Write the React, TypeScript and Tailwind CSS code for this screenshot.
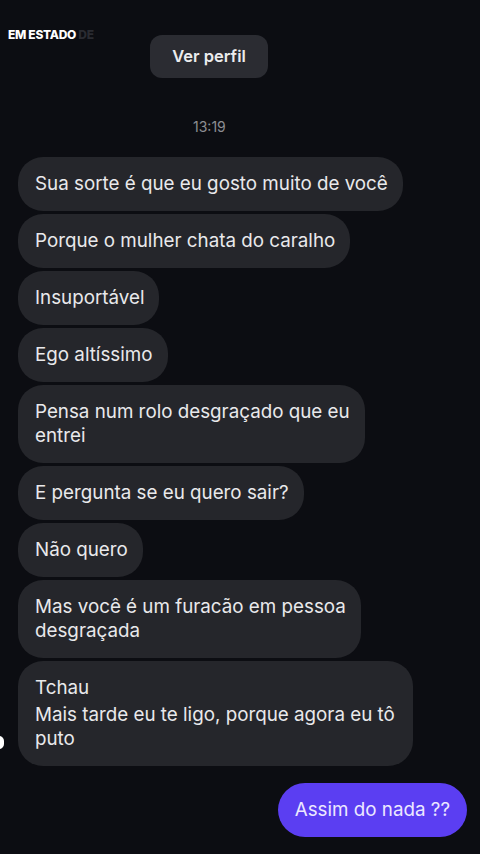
const messages: string[][] = [
  ["Sua sorte é que eu gosto muito de você"],
  ["Porque o mulher chata do caralho"],
  ["Insuportável"],
  ["Ego altíssimo"],
  ["Pensa num rolo desgraçado que eu", "entrei"],
  ["E pergunta se eu quero sair?"],
  ["Não quero"],
  ["Mas você é um furacão em pessoa", "desgraçada"],
];

function Bubble({ lines }: { lines: string[] }) {
  return (
    <div className="w-fit rounded-[25px] bg-[#25262b] py-[15px] pl-[17px] pr-[15px] text-[18.8px] leading-[24px] text-[#e9e9eb]">
      {lines.map((l) => (
        <div key={l} className="whitespace-nowrap">
          {l}
        </div>
      ))}
    </div>
  );
}

export default function App() {
  return (
    <div
      className="relative flex h-[854px] w-[480px] flex-col overflow-hidden bg-[#0c0d12]"
      style={{ fontFamily: "Inter, 'Noto Sans', sans-serif" }}
    >
      {/* header */}
      <div className="flex items-start pt-[29px]">
        <div className="w-[150px] pl-[8px] text-[12px] font-extrabold leading-[12px] tracking-[-0.3px] text-white">
          EM ESTADO <span className="text-[#2a2b31]">DE</span>
        </div>
        <button className="mt-[6px] h-[43px] w-[118px] rounded-[12px] bg-[#2b2c32] text-[16.5px] font-semibold text-[#ececee]">
          Ver perfil
        </button>
      </div>

      <div className="mt-[41px] pl-[193px] text-[14px] leading-[15px] text-[#8c8d93]">
        13:19
      </div>

      {/* received messages */}
      <div className="mt-[23px] flex flex-col gap-[3px] pl-[18px]">
        {messages.map((m) => (
          <Bubble key={m[0]} lines={m} />
        ))}
        <div className="relative w-fit rounded-[25px] bg-[#25262b] py-[15px] pl-[17px] pr-[18px] text-[18.8px] leading-[24px] text-[#e9e9eb]">
          <div className="mb-[3px]">Tchau</div>
          <div className="whitespace-nowrap">Mais tarde eu te ligo, porque agora eu tô</div>
          <div>puto</div>
          <span className="absolute top-[75px] -left-[24px] h-[13px] w-[10px] rounded-full bg-white" />
        </div>
      </div>

      {/* sent */}
      <div className="mt-[17px] flex justify-end pr-[13px]">
        <div className="rounded-[27px] bg-[#5b3ef2] px-[17px] py-[15px] text-[18.8px] leading-[24px] text-[#ece8ff]">
          Assim do nada ??
        </div>
      </div>
    </div>
  );
}
